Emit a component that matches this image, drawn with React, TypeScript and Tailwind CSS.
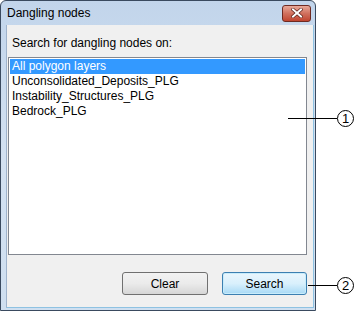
import React from "react";

const font = { fontFamily: '"Segoe UI", "Liberation Sans", Arial, sans-serif' };

function Callout({ n, top, left, lineWidth }: { n: string; top: number; left: number; lineWidth: number }) {
  return (
    <div className="absolute flex items-center" style={{ top, left }}>
      <div className="h-px bg-black" style={{ width: lineWidth }} />
      <div className="w-[17px] h-[17px] rounded-full border border-black bg-white flex items-center justify-center text-[13px] leading-none text-black">
        {n}
      </div>
    </div>
  );
}

export default function App() {
  const items = ["All polygon layers", "Unconsolidated_Deposits_PLG", "Instability_Structures_PLG", "Bedrock_PLG"];
  return (
    <div className="relative w-[356px] h-[311px] bg-white overflow-hidden" style={font}>
      <div className="w-[316px] h-[311px] rounded-t-[6px] border border-[#3a4a5f] bg-gradient-to-b from-[#c2d5eb] via-[#d3e1f1] to-[#cfdff0] flex flex-col">
        {/* title bar */}
        <div className="h-[24px] flex items-center justify-between pl-[6px] pr-[4px] shrink-0">
          <span className="text-[12px] text-black leading-none">Dangling nodes</span>
          <div className="w-[29px] h-[17px] rounded-[3px] border border-[#6e2a22] bg-gradient-to-b from-[#e8a898] via-[#d0705e] to-[#c0442f] flex items-center justify-center">
            <svg width="12" height="10" viewBox="0 0 12 10">
              <path d="M2 1.5 L10 8.5 M10 1.5 L2 8.5" stroke="#5a2018" strokeWidth="3.4" strokeLinecap="square" />
              <path d="M2 1.5 L10 8.5 M10 1.5 L2 8.5" stroke="#ffffff" strokeWidth="2" strokeLinecap="square" />
            </svg>
          </div>
        </div>
        {/* client area */}
        <div className="flex-1 ml-[5px] mr-[1px] mb-[2px] border-l border-[#9fb3cc] border-r border-r-[#8ec2e2] border-b border-b-[#8ec2e2] bg-[#f0f0f0] flex flex-col">
          <div className="pl-[5px] pt-[11px] text-[12px] leading-[15px] text-black">Search for dangling nodes on:</div>
          <div className="ml-[1px] mr-[6px] mt-[6px] h-[198px] border border-[#828790] bg-white p-[1px] text-[12px] text-black">
            {items.map((it, i) => (
              <div
                key={it}
                className={
                  "h-[15px] leading-[15px] pl-[2px] " +
                  (i === 0 ? "bg-[#3399ff] text-white" : "")
                }
              >
                {it}
              </div>
            ))}
          </div>
          <div className="flex justify-end gap-[14px] mt-[17px] mr-[6px]">
            <button className="w-[86px] h-[23px] rounded-[3px] border border-[#707070] bg-gradient-to-b from-[#f2f2f2] via-[#ebebeb] to-[#d6d6d6] text-[12px] text-black">
              Clear
            </button>
            <button className="w-[85px] h-[23px] rounded-[3px] border border-[#3c7fb1] bg-gradient-to-b from-[#eaf6fd] via-[#d9f0fc] to-[#a7d9f5] text-[12px] text-black shadow-[inset_0_0_0_1px_#c8ecfb]">
              Search
            </button>
          </div>
        </div>
      </div>
      <Callout n="1" top={110} left={288} lineWidth={49} />
      <Callout n="2" top={277} left={308} lineWidth={29} />
    </div>
  );
}
